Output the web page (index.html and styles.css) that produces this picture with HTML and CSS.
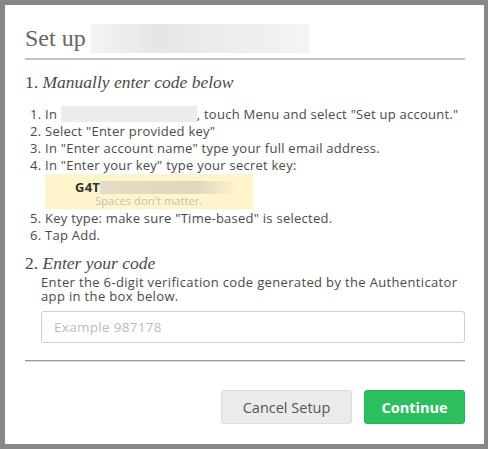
FILE: index.html
```html
<!DOCTYPE html>
<html>
<head>
<meta charset="utf-8">
<link rel="stylesheet" href="styles.css">
</head>
<body>
<div class="backdrop">
  <div class="modal">
    <div class="title-row">
      <h1 class="title">Set up</h1>
      <span class="blur blur-title"></span>
    </div>
    <hr class="rule">
    <h2 class="section">1. <em>Manually enter code below</em></h2>
    <ol class="steps">
      <li class="tight">In <span class="blur blur-app"></span>, touch Menu and select "Set up account."</li>
      <li>Select "Enter provided key"</li>
      <li>In "Enter account name" type your full email address.</li>
      <li>In "Enter your key" type your secret key:
        <div class="keybox">
          <div class="key"><b>G4T</b><span class="blur blur-key"></span></div>
          <div class="hint">Spaces don't matter.</div>
        </div>
      </li>
      <li>Key type: make sure "Time-based" is selected.</li>
      <li>Tap Add.</li>
    </ol>
    <h2 class="section section2">2. <em>Enter your code</em></h2>
    <p class="desc">Enter the 6-digit verification code generated by the Authenticator app in the box below.</p>
    <input class="code" type="text" placeholder="Example 987178">
    <hr class="rule rule2">
    <div class="actions">
      <button class="btn cancel">Cancel Setup</button>
      <button class="btn go">Continue</button>
    </div>
  </div>
</div>
</body>
</html>
```
FILE: styles.css
```css
html, body {
  margin: 0;
  padding: 0;
}
body {
  width: 488px;
  height: 449px;
  overflow: hidden;
  background: #878787;
  font-family: "Open Sans", sans-serif;
}
.backdrop {
  padding: 5px 4px 5px 5px;
  height: 449px;
  box-sizing: border-box;
}
.modal {
  background: #fff;
  height: 439px;
  box-sizing: border-box;
  padding: 17px 19px 0 20px;
  color: #4a4a4a;
}
.title-row {
  display: flex;
  align-items: center;
  height: 32px;
}
.title {
  margin: 0;
  font-family: "Liberation Serif", serif;
  font-weight: normal;
  font-size: 24px;
  color: #666;
  line-height: 32px;
}
.blur {
  display: inline-block;
  background: linear-gradient(90deg, #f4f4f4, #e6e6e6 30%, #ececec 60%, #f4f4f4);
  vertical-align: middle;
}
.blur-title {
  width: 218px;
  height: 29px;
  margin-left: 5px;
}
.rule {
  border: 0;
  border-top: 2px solid #c4c4c4;
  margin: 4px 0 0 0;
}
.section {
  margin: 10px 0 0 0;
  font-family: "Liberation Serif", serif;
  font-weight: normal;
  font-size: 17.5px;
  line-height: 24px;
  color: #4a4a4a;
}
.section em { font-style: italic; }
.steps {
  margin: 12px 0 0 0;
  padding-left: 20px;
  font-size: 13px;
  letter-spacing: 0.25px;
  line-height: 17px;
}
.steps .tight {
  white-space: nowrap;
}
.blur-app {
  width: 136px;
  height: 16px;
  background: #ececec;
  vertical-align: -3px;
}
.keybox {
  background: #fff4cc;
  width: 208px;
  height: 35px;
  box-sizing: border-box;
  padding: 5px 0 0 30px;
  margin: 0 0 1px 0;
}
.key {
  display: flex;
  align-items: center;
  font-size: 13px;
  line-height: 16px;
  color: #333;
}
.blur-key {
  width: 138px;
  height: 13px;
  background: linear-gradient(90deg, #e4dcc4, #e0d6bd 70%, #fff4cc);
}
.hint {
  font-size: 11px;
  line-height: 12px;
  color: #c4c0b4;
  padding-left: 20px;
  letter-spacing: 0.1px;
}
.section2 { margin-top: 7px; }
.desc {
  margin: 0 0 0 16px;
  font-size: 13px;
  letter-spacing: 0.35px;
  line-height: 14px;
}
.code {
  display: block;
  margin: 8px 0 0 16px;
  width: calc(100% - 16px);
  height: 32px;
  box-sizing: border-box;
  border: 1px solid #cfcfcf;
  border-radius: 3px;
  padding: 0 12px;
  font-family: inherit;
  font-size: 13.5px;
  letter-spacing: 0.3px;
  color: #444;
}
.code::placeholder { color: #bcbcbc; }
.rule2 {
  margin-top: 17px;
  border-top: 1px solid #999;
  border-bottom: 1px solid #ddd;
}
.actions {
  display: flex;
  justify-content: flex-end;
  gap: 12px;
  margin-top: 28px;
}
.btn {
  height: 34px;
  border-radius: 3px;
  font-family: inherit;
  font-size: 14.5px;
  cursor: pointer;
}
.cancel {
  width: 131px;
  background: #ebebeb;
  border: 1px solid #dcdcdc;
  color: #555;
}
.go {
  width: 101px;
  background: #2dbe60;
  border: 1px solid #28b058;
  color: #fff;
  font-weight: bold;
}
```
